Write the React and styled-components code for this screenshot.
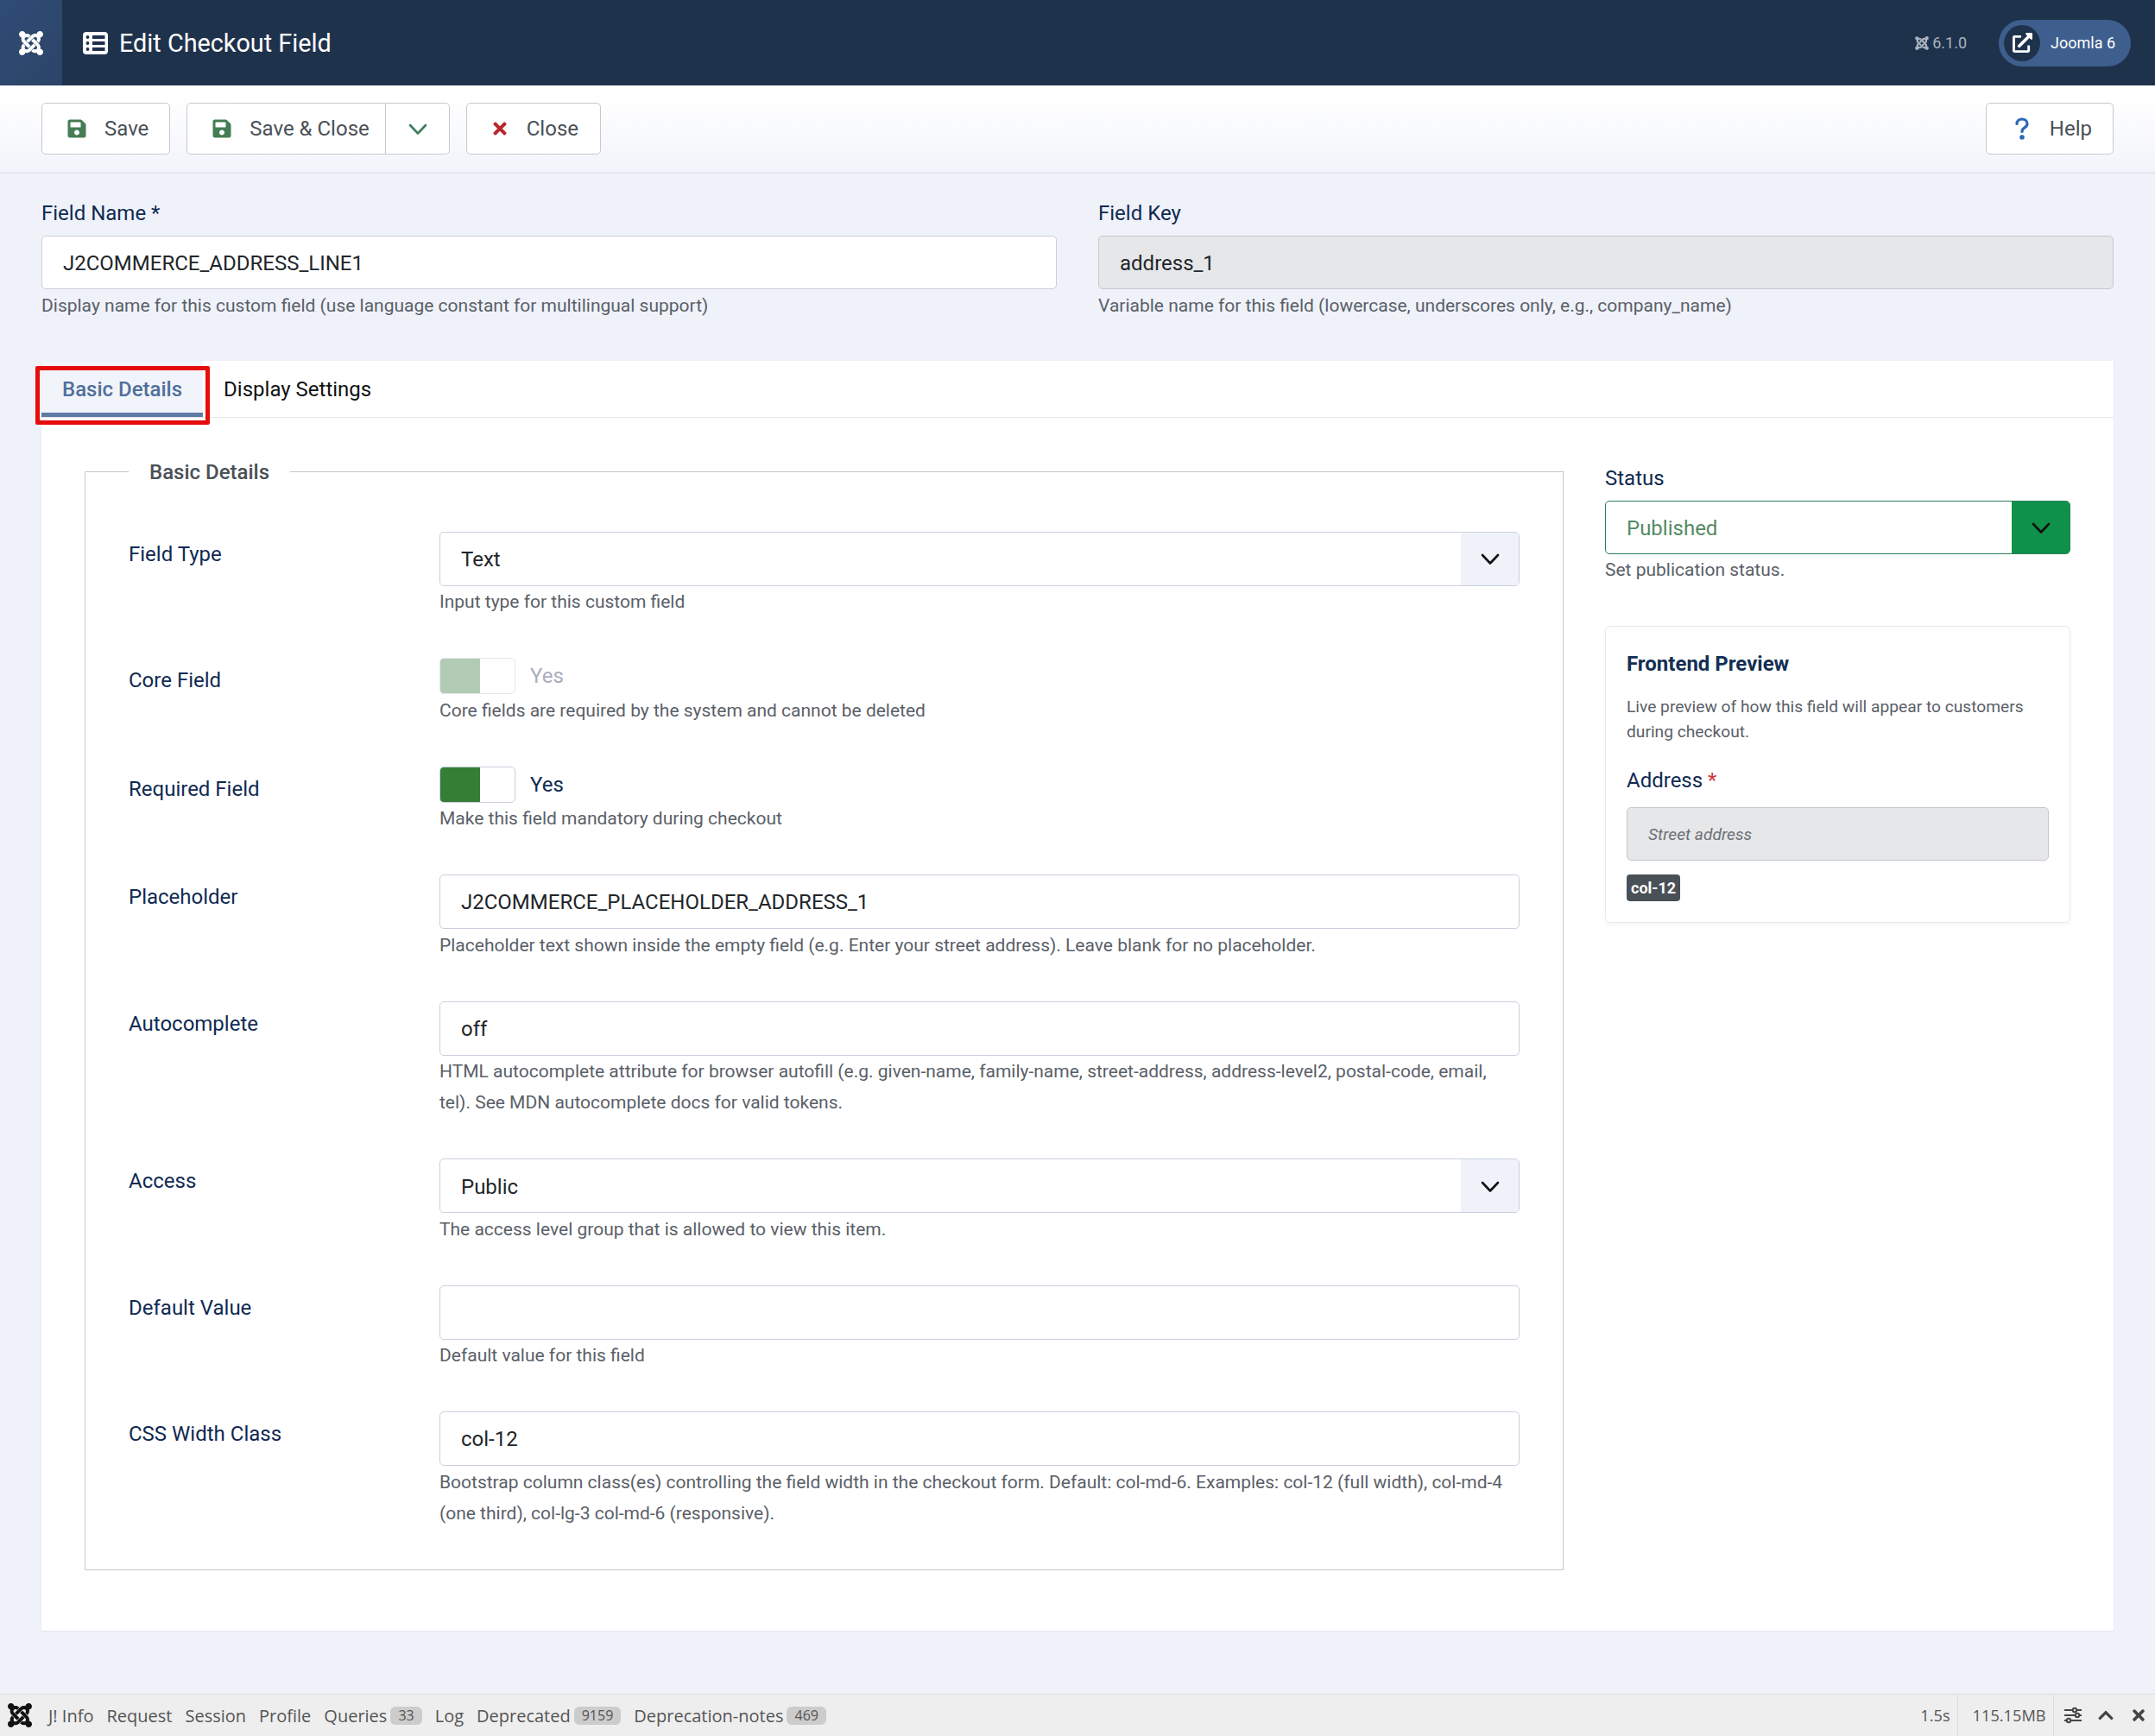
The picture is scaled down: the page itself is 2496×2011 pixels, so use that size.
import React from "react";
import styled, { createGlobalStyle } from "styled-components";
import { FaJoomla, FaSave, FaTimes, FaExternalLinkAlt, FaChevronUp } from "react-icons/fa";

const Global = createGlobalStyle`
  html, body { margin: 0; padding: 0; }
  body { background: #eff2f9; font-family: Roboto, "Liberation Sans", sans-serif; color: #495057; }
  * { box-sizing: border-box; }
`;

const Page = styled.div`
  min-height: 2011px;
  display: flex;
  flex-direction: column;
`;
const Header = styled.header`
  height: 99px;
  background: #1f324c;
  display: flex;
  align-items: center;
  color: #fff;
  padding-right: 28px;
`;
const LogoBox = styled.div`
  width: 72px;
  height: 99px;
  background: linear-gradient(135deg, #2f4c75, #2c4468);
  display: flex;
  align-items: center;
  justify-content: center;
  font-size: 32px;
`;
const Title = styled.h1`
  margin: 0 0 0 24px;
  font-size: 28.8px;
  font-weight: 400;
  display: flex;
  align-items: center;
  gap: 13px;
  line-height: 36px;
  flex: 1;
`;
const Version = styled.div`
  display: flex;
  align-items: center;
  gap: 3px;
  font-size: 18px;
  color: #a9b3c1;
  margin-right: 37px;
`;
const Pill = styled.div`
  width: 153px;
  height: 54px;
  border-radius: 27px;
  background: #3e5f8e;
  display: flex;
  align-items: center;
  padding-left: 6px;
  gap: 12px;
  font-size: 18px;
`;
const PillIcon = styled.span`
  width: 42px;
  height: 42px;
  border-radius: 50%;
  background: #1f324c;
  display: flex;
  align-items: center;
  justify-content: center;
  font-size: 24px;
`;
const Toolbar = styled.div`
  height: 100px;
  padding: 20px 48px;
  display: flex;
  gap: 19px;
  background: linear-gradient(#fff 15%, #f1f4fa);
  box-shadow: 0 1px 3px rgba(60, 80, 120, .12);
`;
const Btn = styled.div`
  height: 60px;
  display: flex;
  align-items: center;
  background: #fff;
  border: 1px solid #c6c9cf;
  border-radius: 5px;
  font-size: 24px;
  color: #495057;
  padding: 0 ${p => p.$pr ?? 24}px 0 ${p => p.$pl ?? 28}px;
  gap: ${p => p.$gap ?? 22}px;
  margin-left: ${p => (p.$right ? "auto" : 0)};
`;
const SplitPart = styled.span`
  height: 100%;
  width: 75px;
  margin-right: -1px;
  margin-left: -2px;
  border-left: 1px solid #c6c9cf;
  display: flex;
  align-items: center;
  justify-content: center;
`;
const Main = styled.main`
  padding: 30px 48px 0;
`;
const TopGrid = styled.div`
  display: grid;
  grid-template-columns: 1fr 1fr;
  gap: 48px;
`;
const TopLabel = styled.div`
  font-size: 24px;
  line-height: 36px;
  color: #0f2a52;
  margin-bottom: 8px;
`;
const Input = styled.div`
  height: ${p => p.$h ?? 63}px;
  display: flex;
  align-items: center;
  padding: 1px 0 0 24px;
  background: ${p => (p.$disabled ? "#e6e7e9" : "#fff")};
  border: 1px solid ${p => (p.$disabled ? "#c4c8ce" : "#c9cfdc")};
  border-radius: 5px;
  font-size: 24px;
  color: #22262a;
`;
const Help = styled.div`
  font-size: 21px;
  line-height: 35.8px;
  padding-top: 1.5px;
  margin-bottom: -1.5px;
  color: #5a6068;
`;
const Card = styled.section`
  margin-top: 47px;
  background: #fff;
  box-shadow: 0 1px 2px rgba(60, 80, 120, .08);
`;
const TabBar = styled.div`
  height: 66px;
  display: flex;
  position: relative;
  border-bottom: 1px solid #e4e7ec;
`;
const Tab = styled.div`
  height: 65px;
  padding: 15px 24px 0;
  font-size: 24px;
  line-height: 36px;
  font-weight: ${p => (p.$active ? 500 : 400)};
  color: ${p => (p.$active ? "#4f6f9a" : "#111")};
  background: ${p => (p.$active ? "#f1f4fa" : "transparent")};
  border-bottom: ${p => (p.$active ? "5px solid #5e7ba3" : "0")};
`;
const RedBox = styled.div`
  position: absolute;
  left: -7px;
  top: 6px;
  width: 202px;
  height: 68px;
  border: 5px solid #e60d0d;
  border-radius: 2px;
`;
const Panel = styled.div`
  display: grid;
  grid-template-columns: 1713px 1fr;
  gap: 48px;
  padding: 45px 50px 70px;
`;
const Fieldset = styled.fieldset`
  margin: 0;
  min-width: 0;
  border: 1px solid #c2c6cc;
  padding: 51px 50px 0;
`;
const Legend = styled.legend`
  padding: 0 24px;
  font-size: 24px;
  line-height: 36px;
  font-weight: 500;
  color: #495057;
`;
const Row = styled.div`
  display: grid;
  grid-template-columns: 360px 1fr;
  margin-bottom: 47.75px;
`;
const RowLabel = styled.div`
  font-size: 24px;
  line-height: 36px;
  padding-top: 8px;
  color: #0f2a52;
`;
const Select = styled(Input)`
  padding-top: 0;
  padding-right: 0;
  justify-content: space-between;
  & > span:first-child { padding-top: 2px; }
`;
const Arrow = styled.span`
  width: 67px;
  height: 100%;
  background: ${p => (p.$green ? "#0e9148" : "#eff2f9")};
  border-radius: 0 4px 4px 0;
  display: flex;
  align-items: center;
  justify-content: center;
  color: #111;
`;
const ToggleRow = styled.div`
  display: flex;
  align-items: center;
  gap: 17px;
  height: 42px;
  font-size: 24px;
  color: ${p => (p.$disabled ? "#a9adbd" : "#0f2a52")};
`;
const Toggle = styled.span`
  width: 88px;
  height: 42px;
  display: block;
  background: #fff;
  border: 1px solid ${p => (p.$disabled ? "#e6e8ee" : "#c9cfdc")};
  border-radius: 5px;
  overflow: hidden;
  &::before {
    content: "";
    display: block;
    width: 46px;
    height: 100%;
    background: ${p => (p.$disabled ? "#b2ccb3" : "#357e35")};
  }
`;
const Side = styled.aside`
  padding-top: 7px;
`;
const StatusSelect = styled(Select)`
  height: 62px;
  border-color: #2d7d5b;
  color: #558a62;
`;
const Preview = styled.div`
  margin-top: 47px;
  border: 1px solid #e8eaee;
  border-radius: 6px;
  box-shadow: 0 2px 4px rgba(60, 80, 120, .06);
  padding: 25px 24px;
  height: 344px;
`;
const PreviewTitle = styled.div`
  font-size: 24px;
  line-height: 36px;
  font-weight: 700;
  color: #132f53;
`;
const PreviewText = styled.div`
  margin-top: 17px;
  font-size: 19.2px;
  line-height: 29px;
  color: #5a6068;
`;
const PreviewLabel = styled.div`
  margin-top: 24px;
  font-size: 24px;
  line-height: 36px;
  color: #0f2a52;
  margin-bottom: 13px;
  & span { color: #d0343f; }
`;
const PreviewInput = styled(Input)`
  height: 62px;
  font-size: 19.2px;
  font-style: italic;
  color: #6c7075;
`;
const Badge = styled.span`
  display: inline-block;
  margin-top: 16px;
  background: #495057;
  color: #fff;
  font-size: 18px;
  font-weight: 700;
  line-height: 31px;
  padding: 0 5px;
  border-radius: 4px;
`;
const Footer = styled.footer`
  margin-top: auto;
  height: 49px;
  background: #eee;
  border-top: 1px solid #ddd;
  display: flex;
  align-items: center;
  font-family: "Open Sans", sans-serif;
  font-size: 20px;
  color: #555;
`;
const FootLogo = styled.span`
  width: 56px;
  padding-left: 7px;
  display: flex;
  font-size: 32px;
  color: #111;
`;
const FootItem = styled.span`
  margin-right: 15px;
  display: flex;
  align-items: center;
  gap: 4px;
`;
const Count = styled.span`
  background: #ccc;
  border-radius: 6px;
  font-size: 16px;
  line-height: 21px;
  padding: 0 9px;
  color: #555;
`;
const FootRight = styled.div`
  margin-left: auto;
  display: flex;
  align-items: center;
  height: 100%;
`;
const FootStat = styled.span`
  height: 100%;
  display: flex;
  align-items: center;
  font-size: 18.2px;
  padding: 0 8px 0 17px;
  border-right: 1px solid #ddd;
`;
const FootIcons = styled.span`
  display: flex;
  align-items: center;
  gap: 18px;
  padding: 0 9.5px 0 12px;
  color: #444;
  font-size: 20px;
`;

const Chevron = ({ color = "currentColor", size = 24 }) => (
  <svg width={size} height={size} viewBox="0 0 24 24" fill="none" stroke={color} strokeWidth="2.6" strokeLinecap="round" strokeLinejoin="round">
    <path d="M3 8 12 17.5 21 8" />
  </svg>
);
const Sliders = () => (
  <svg width="20" height="20" viewBox="0 0 20 20" fill="none" stroke="#444" strokeWidth="2">
    <path d="M0 4h20M0 10h20M0 16h20" />
    <circle cx="12" cy="4" r="2.2" fill="#eee" />
    <circle cx="15" cy="10" r="2.2" fill="#eee" />
    <circle cx="5" cy="16" r="2.2" fill="#eee" />
  </svg>
);
const ListIcon = () => (
  <svg width="29" height="26" viewBox="0 0 29 26">
    <rect width="29" height="26" rx="4" fill="#fff" />
    <g fill="#1f324c">
      <circle cx="5.5" cy="6" r="1.9" />
      <circle cx="5.5" cy="13" r="1.9" />
      <circle cx="5.5" cy="20" r="1.9" />
      <rect x="11" y="4" width="14.5" height="4" />
      <rect x="11" y="11" width="14.5" height="4" />
      <rect x="11" y="18" width="14.5" height="4" />
    </g>
  </svg>
);
const QuestionIcon = () => (
  <svg width="16" height="26" viewBox="0 0 16 26" fill="none" stroke="#2a69b8" strokeWidth="3.2" strokeLinecap="round">
    <path d="M2 7.5C2 4 4.6 2 8 2s6 2 6 5.2c0 2.6-1.6 3.8-3.4 5C9 13.2 8 14.2 8 16.5" />
    <circle cx="8" cy="23" r="1.2" fill="#2a69b8" />
  </svg>
);

const SaveIcon = () => <FaSave color="#457d54" size={24} />;

const FieldRow = ({ label, children, help }) => (
  <Row>
    <RowLabel>{label}</RowLabel>
    <div>
      {children}
      <Help>{help}</Help>
    </div>
  </Row>
);

export default function App() {
  return (
    <Page>
      <Global />
      <Header>
        <LogoBox><FaJoomla /></LogoBox>
        <Title><ListIcon />Edit Checkout Field</Title>
        <Version><FaJoomla size={18} />6.1.0</Version>
        <Pill>
          <PillIcon><FaExternalLinkAlt size={23} /></PillIcon>
          Joomla 6
        </Pill>
      </Header>
      <Toolbar>
        <Btn $gap={20}><SaveIcon />Save</Btn>
        <Btn $pr={0} $pl={28} $gap={20}>
          <SaveIcon />Save &amp; Close
          <SplitPart><Chevron color="#3f7d5a" /></SplitPart>
        </Btn>
        <Btn $pl={27} $pr={25} $gap={20}><FaTimes color="#b8282c" size={22} />Close</Btn>
        <Btn $right $pl={33} $gap={24}><QuestionIcon />Help</Btn>
      </Toolbar>
      <Main>
        <TopGrid>
          <div>
            <TopLabel>Field Name *</TopLabel>
            <Input $h={62}>J2COMMERCE_ADDRESS_LINE1</Input>
            <Help>Display name for this custom field (use language constant for multilingual support)</Help>
          </div>
          <div>
            <TopLabel>Field Key</TopLabel>
            <Input $h={62} $disabled>address_1</Input>
            <Help>Variable name for this field (lowercase, underscores only, e.g., company_name)</Help>
          </div>
        </TopGrid>
        <Card>
          <TabBar>
            <Tab $active>Basic Details</Tab>
            <Tab>Display Settings</Tab>
            <RedBox />
          </TabBar>
          <Panel>
            <Fieldset>
              <Legend>Basic Details</Legend>
              <FieldRow label="Field Type" help="Input type for this custom field">
                <Select><span>Text</span><Arrow><Chevron /></Arrow></Select>
              </FieldRow>
              <FieldRow label="Core Field" help="Core fields are required by the system and cannot be deleted">
                <ToggleRow $disabled><Toggle $disabled />Yes</ToggleRow>
              </FieldRow>
              <FieldRow label="Required Field" help="Make this field mandatory during checkout">
                <ToggleRow><Toggle />Yes</ToggleRow>
              </FieldRow>
              <FieldRow label="Placeholder" help="Placeholder text shown inside the empty field (e.g. Enter your street address). Leave blank for no placeholder.">
                <Input>J2COMMERCE_PLACEHOLDER_ADDRESS_1</Input>
              </FieldRow>
              <FieldRow label="Autocomplete" help="HTML autocomplete attribute for browser autofill (e.g. given-name, family-name, street-address, address-level2, postal-code, email, tel). See MDN autocomplete docs for valid tokens.">
                <Input>off</Input>
              </FieldRow>
              <FieldRow label="Access" help="The access level group that is allowed to view this item.">
                <Select><span>Public</span><Arrow><Chevron /></Arrow></Select>
              </FieldRow>
              <FieldRow label="Default Value" help="Default value for this field">
                <Input />
              </FieldRow>
              <FieldRow label="CSS Width Class" help="Bootstrap column class(es) controlling the field width in the checkout form. Default: col-md-6. Examples: col-12 (full width), col-md-4 (one third), col-lg-3 col-md-6 (responsive).">
                <Input>col-12</Input>
              </FieldRow>
            </Fieldset>
            <Side>
              <TopLabel>Status</TopLabel>
              <StatusSelect><span>Published</span><Arrow $green><Chevron /></Arrow></StatusSelect>
              <Help>Set publication status.</Help>
              <Preview>
                <PreviewTitle>Frontend Preview</PreviewTitle>
                <PreviewText>Live preview of how this field will appear to customers during checkout.</PreviewText>
                <PreviewLabel>Address <span>*</span></PreviewLabel>
                <PreviewInput $disabled>Street address</PreviewInput>
                <Badge>col-12</Badge>
              </Preview>
            </Side>
          </Panel>
        </Card>
      </Main>
      <Footer>
        <FootLogo><FaJoomla /></FootLogo>
        <FootItem>J! Info</FootItem>
        <FootItem>Request</FootItem>
        <FootItem>Session</FootItem>
        <FootItem>Profile</FootItem>
        <FootItem>Queries <Count>33</Count></FootItem>
        <FootItem>Log</FootItem>
        <FootItem>Deprecated <Count>9159</Count></FootItem>
        <FootItem>Deprecation-notes <Count>469</Count></FootItem>
        <FootRight>
          <FootStat>1.5s</FootStat>
          <FootStat>115.15MB</FootStat>
          <FootIcons><Sliders /><FaChevronUp /><FaTimes /></FootIcons>
        </FootRight>
      </Footer>
    </Page>
  );
}
